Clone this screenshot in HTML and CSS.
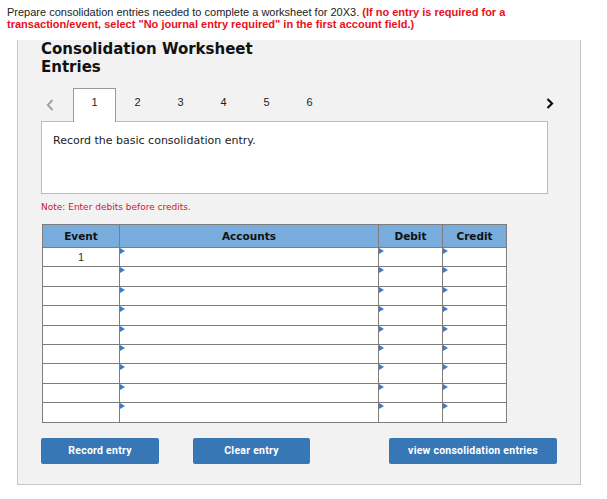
FILE: index.html
```html
<!DOCTYPE html>
<html>
<head>
<meta charset="utf-8">
<link rel="stylesheet" href="styles.css">
</head>
<body>
<p class="prompt">Prepare consolidation entries needed to complete a worksheet for 20X3. <b class="warn">(If no entry is required for a</b><br><b class="warn">transaction/event, select "No journal entry required" in the first account field.)</b></p>
<div class="panel">
  <h2 class="title">Consolidation Worksheet<br>Entries</h2>
  <div class="tabs">
    <span class="nav prev"><svg width="8" height="12" viewBox="0 0 8 12"><polyline points="6.5,1 1.8,6 6.5,11" fill="none" stroke="#a3a3a3" stroke-width="2"/></svg></span>
    <span class="tab active">1</span>
    <span class="tab">2</span>
    <span class="tab">3</span>
    <span class="tab">4</span>
    <span class="tab">5</span>
    <span class="tab">6</span>
    <span class="spacer"></span>
    <span class="nav next"><svg width="8" height="11" viewBox="0 0 8 11"><polyline points="1.5,1 6,5.5 1.5,10" fill="none" stroke="#111" stroke-width="2.2"/></svg></span>
  </div>
  <div class="desc">Record the basic consolidation entry.</div>
  <div class="note">Note: Enter debits before credits.</div>
  <table class="sheet">
    <thead>
      <tr><th class="c-ev">Event</th><th class="c-ac">Accounts</th><th class="c-dr">Debit</th><th class="c-cr">Credit</th></tr>
    </thead>
    <tbody>
      <tr><td class="ev">1</td><td><i class="mark"></i></td><td><i class="mark"></i></td><td><i class="mark"></i></td></tr>
      <tr><td class="ev"></td><td><i class="mark"></i></td><td><i class="mark"></i></td><td><i class="mark"></i></td></tr>
      <tr><td class="ev"></td><td><i class="mark"></i></td><td><i class="mark"></i></td><td><i class="mark"></i></td></tr>
      <tr><td class="ev"></td><td><i class="mark"></i></td><td><i class="mark"></i></td><td><i class="mark"></i></td></tr>
      <tr><td class="ev"></td><td><i class="mark"></i></td><td><i class="mark"></i></td><td><i class="mark"></i></td></tr>
      <tr><td class="ev"></td><td><i class="mark"></i></td><td><i class="mark"></i></td><td><i class="mark"></i></td></tr>
      <tr><td class="ev"></td><td><i class="mark"></i></td><td><i class="mark"></i></td><td><i class="mark"></i></td></tr>
      <tr><td class="ev"></td><td><i class="mark"></i></td><td><i class="mark"></i></td><td><i class="mark"></i></td></tr>
      <tr><td class="ev"></td><td><i class="mark"></i></td><td><i class="mark"></i></td><td><i class="mark"></i></td></tr>
    </tbody>
  </table>
  <div class="actions">
    <button class="btn b-record">Record entry</button>
    <button class="btn b-clear">Clear entry</button>
    <button class="btn b-view">view consolidation entries</button>
  </div>
</div>
</body>
</html>
```
FILE: styles.css
```css
* { box-sizing: border-box; }
html, body { margin: 0; padding: 0; background: #fff; }
body { font-family: "Liberation Sans", Arial, sans-serif; }

.prompt {
  margin: 0;
  padding: 6px 7px 0 7px;
  font-size: 11px;
  line-height: 12px;
  color: #222;
  width: 560px;
}
.warn { color: #e8101c; font-weight: bold; }

.panel {
  margin: 10px 0 0 17px;
  width: 564px;
  background: #f2f2f2;
  border: 1px solid #c6c6c6;
  border-top: none;
  padding: 0 32px 20px 23px;
}

.title {
  margin: 0;
  padding-top: 1px;
  font-family: "DejaVu Sans", Verdana, sans-serif;
  font-weight: bold;
  font-size: 15px;
  line-height: 17.5px;
  color: #111;
}

.tabs {
  display: flex;
  align-items: flex-start;
  margin-top: 12px;
  margin-bottom: -1px;
  height: 34px;
}
.nav { display: block; }
.prev { width: 32px; padding: 9px 0 0 5px; }
.next { margin-right: -6px; padding-top: 7px; }
.spacer { flex: 1; }
.tab {
  width: 43px;
  height: 34px;
  text-align: center;
  font-size: 11px;
  line-height: 12px;
  padding-top: 7px;
  color: #222;
  border: 1px solid transparent;
  border-bottom: none;
}
.tab.active {
  background: #fff;
  border-color: #9a9a9a;
  position: relative;
  z-index: 1;
}

.desc {
  height: 73px;
  background: #fff;
  border: 1px solid #bcbcbc;
  padding: 12px 11px;
  font-family: "DejaVu Sans", Verdana, sans-serif;
  font-size: 11px;
  line-height: 14px;
  color: #222;
}

.note {
  margin-top: 8px;
  font-family: "DejaVu Sans", Verdana, sans-serif;
  font-size: 9px;
  line-height: 11px;
  color: #c8202e;
}

.sheet {
  margin: 11px 0 0 1px;
  border-collapse: collapse;
  table-layout: fixed;
  width: 465px;
}
.sheet th, .sheet td {
  border: 1px solid #7d7d7d;
  padding: 0;
}
.sheet th {
  background: #77acdd;
  height: 23px;
  font-family: "DejaVu Sans", Verdana, sans-serif;
  font-size: 10.5px;
  font-weight: bold;
  color: #111;
  text-align: center;
  vertical-align: middle;
}
.c-ev { width: 77px; }
.c-ac { width: 259px; }
.c-dr { width: 64px; }
.c-cr { width: 64px; }
.sheet td {
  background: #fff;
  height: 19.4px;
  vertical-align: top;
}
.sheet td.ev {
  text-align: center;
  font-size: 11px;
  line-height: 18px;
  color: #333;
}
.mark {
  display: block;
  width: 0;
  height: 0;
  margin-top: 0;
  border-left: 5px solid #3b7bc8;
  border-top: 3px solid transparent;
  border-bottom: 3px solid transparent;
}

.actions {
  display: flex;
  margin-top: 15px;
  margin-right: -10px;
}
.btn {
  height: 26px;
  border: none;
  border-radius: 2px;
  background: #3777b5;
  color: #fff;
  font-family: Roboto, "Open Sans", sans-serif;
  font-weight: bold;
  font-size: 10.5px;
  letter-spacing: 0.25px;
  padding: 0;
  text-align: center;
}
.b-record { width: 118px; }
.b-clear { width: 117px; margin-left: 34px; }
.b-view { width: 168px; margin-left: 79px; }
```
